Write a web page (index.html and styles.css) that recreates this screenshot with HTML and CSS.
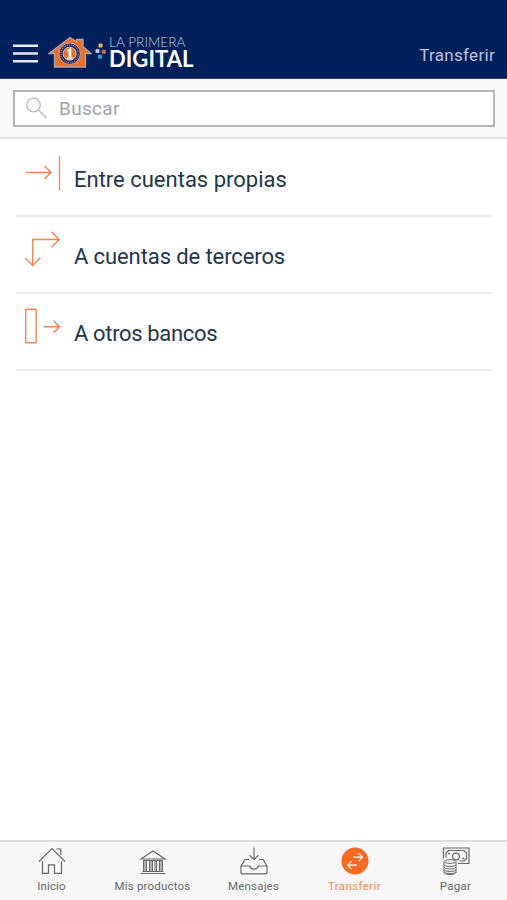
FILE: index.html
```html
<!DOCTYPE html>
<html lang="es">
<head>
<meta charset="utf-8">
<meta name="viewport" content="width=device-width, initial-scale=1">
<title>Transferir</title>
<link rel="stylesheet" href="styles.css">
</head>
<body>
<div class="app">
  <header class="topbar">
    <svg class="menu" width="25" height="20" viewBox="0 0 25 20"><path d="M0 1.700H25M0 9.500H25M0 17.200H25" stroke="#e5e9f1" stroke-width="2.500"/></svg>
    <svg class="house" width="44" height="32" viewBox="0 0 44 32">
      <path d="M1 17.500L22 1.500l6.500 4V3.500H35v7L43 17.500H37.500V31H6.500V17.500Z" fill="#ed7023" stroke="#a9a5b5" stroke-width="1.300"/>
      <circle cx="21.700" cy="17.700" r="10.700" fill="#252a60" stroke="#c9a49c" stroke-width="1"/>
      <circle cx="21.700" cy="17.700" r="8.700" fill="none" stroke="#a68e9b" stroke-width="1.200" stroke-dasharray="1 1"/>
      <circle cx="21.700" cy="17.700" r="6.500" fill="#e96f2d" stroke="#ece3df" stroke-width=".8"/>
      <path d="M19 14.500L21.500 12.500h1.800v9h1.700v2h-6v-2h1.600v-6H19Z" fill="#fff"/>
    </svg>
    <svg class="dots" width="12" height="17" viewBox="0 0 12 17">
      <rect x="3.500" y=".5" width="4" height="4" rx=".8" fill="#efb552"/>
      <rect x=".5" y="6" width="4" height="4" rx=".8" fill="#c4c5d2"/>
      <rect x="6.800" y="6.800" width="4" height="4" rx=".8" fill="#dc6847"/>
      <rect x="3" y="11.800" width="4" height="4" rx=".8" fill="#2ba5b7"/>
    </svg>
    <div class="brand"><span class="brand-top">LA PRIMERA</span><span class="brand-main">DIGITAL</span></div>
    <h1 class="title">Transferir</h1>
  </header>
  <div class="search">
    <div class="field">
      <svg width="23" height="23" viewBox="0 0 23 23" fill="none" stroke="#bcbec0" stroke-width="1.300"><circle cx="7.500" cy="8" r="6.800"/><path d="M12.500 13L20.500 21"/></svg>
      <span>Buscar</span>
    </div>
  </div>
  <main class="list">
    <div class="row">
      <svg width="38" height="38" viewBox="0 0 38 38"><path d="M2 18.500H27M20.500 12l6.500 6.500-6.500 6.500M35.500 2v34"/></svg>
      <span class="propias">Entre cuentas propias</span>
    </div>
    <div class="row">
      <svg width="38" height="38" viewBox="0 0 38 38"><path d="M8.700 34.500V8.500H35.500M27.500 .8l7.700 7.700-7.700 7.700M1.200 27l7.500 7.500 7.500-7.500"/></svg>
      <span class="terceros">A cuentas de terceros</span>
    </div>
    <div class="row">
      <svg width="38" height="38" viewBox="0 0 38 38"><rect x="1.700" y="1.200" width="10.500" height="33.500" rx="1"/><path d="M19.500 18.700H35.500M29.500 12.700l6 6-6 6"/></svg>
      <span class="bancos">A otros bancos</span>
    </div>
  </main>
  <nav class="tabs">
    <div class="tab">
      <svg width="28" height="28" viewBox="0 0 28 28"><path d="M1 14.500L14 1.500l13 13M4.500 14v12.300h6v-8.500h6v8.500h7V14M18.500 2h4.300v6"/></svg>
      <span class="t1">Inicio</span>
    </div>
    <div class="tab">
      <svg width="28" height="28" viewBox="0 0 28 28"><path d="M2 12L14 4 26 12ZM4 13.500h20M3.500 24.500h21M1.500 26.500h25"/><path d="M4.500 14v10M6 14v10M7.500 14v10M12 14v10M13.500 14v10M10.500 14v10M16 14v10M17.500 14v10M20.500 14v10M22 14v10M23.500 14v10" stroke-width="1"/></svg>
      <span class="t2">Mis productos</span>
    </div>
    <div class="tab">
      <svg width="28" height="28" viewBox="0 0 28 28"><path d="M14 .5v12M9.500 8.300L14 12.700l4.500-4.400M9 12.500H5L1 19v6.500q0 1.300 1.300 1.300h23.400q1.300 0 1.300-1.300V19l-4-6.500h-4M1 19h8.500q1.200 3.200 4.500 3.200t4.500-3.200H27"/></svg>
      <span class="t3">Mensajes</span>
    </div>
    <div class="tab active">
      <svg width="28" height="28" viewBox="0 0 28 28"><circle class="disc" cx="14" cy="14" r="13.500"/><path d="M12 10.200h9.500M17.500 6.200l4 4-4 4M16 18.200H6.500M10.500 14.200l-4 4 4 4"/></svg>
      <span class="t4">Transferir</span>
    </div>
    <div class="tab">
      <svg width="28" height="28" viewBox="0 0 28 28"><path d="M1.500 11.500V1H27v15.500H16M4 10.500V6L6.500 3.500H22L24.500 6v5.500L22 14H17.500"/><circle cx="14" cy="9.500" r="3.400"/><circle class="dot" cx="7" cy="6.500" r="1"/><circle class="dot" cx="21.300" cy="11.500" r="1"/><path class="coins" d="M2 15v10.500q0 2 6 2t6-2V15M2 17.500q0 2 6 2t6-2M2 20q0 2 6 2t6-2M2 22.500q0 2 6 2t6-2M2 25q0 1.500 6 1.500t6-1.500"/><ellipse class="coins" cx="8" cy="14.500" rx="6" ry="1.800"/></svg>
      <span class="t5">Pagar</span>
    </div>
  </nav>
</div>
</body>
</html>
```

FILE: styles.css
```css
* { box-sizing: border-box; }
body { margin: 0; font-family: Roboto, "Liberation Sans", sans-serif; background: #fff; }
.app { height: 900px; display: flex; flex-direction: column; overflow: hidden; }
svg { flex: none; display: block; }

.topbar { height: 79px; flex: none; display: flex; align-items: flex-start; padding: 0 12px 0 13px; background: #00205c; border-bottom: 1px solid #2c477a; }
.menu { margin-top: 44px; }
.house { margin: 36px 0 0 10px; }
.dots { margin: 43px 0 0 3px; }
.brand { margin: 35px 0 0 2px; display: flex; flex-direction: column; color: #fff; font-family: Lato, sans-serif; white-space: nowrap; }
.brand-top { font-size: 13.500px; line-height: 14px; font-weight: 300; letter-spacing: .1px; color: #c3cbdd; }
.brand-main { font-size: 22px; line-height: 19px; font-weight: 700; letter-spacing: .05px; }
.title { margin: 44px 0 0 auto; font-size: 17px; line-height: 22px; font-weight: 400; letter-spacing: .3px; color: #bac5db; }

.search { height: 60px; flex: none; padding: 11px 12px 0 13px; background: #f9f9f9; border-bottom: 2px solid #e0e0e0; }
.field { height: 37px; display: flex; align-items: center; gap: 10px; padding-left: 11px; border: 2px solid #b5b6b8; background: #fff; color: #a2a5a9; font-size: 19px; letter-spacing: .3px; }

.list { flex: 1; padding: 0 15px 0 16px; }
.row { height: 77px; display: flex; padding: 14px 0 0 8px; border-bottom: 2px solid #ededee; color: #23364a; font-size: 22px; line-height: 26px; }
.row:first-child { height: 78px; padding-top: 15px; }
.row svg { fill: none; stroke: #f78550; stroke-width: 1.400; }
.row span { margin: 13px 0 0 12px; }
.terceros { letter-spacing: -.1px; }
.bancos { letter-spacing: -.35px; }

.tabs { height: 60px; flex: none; display: grid; grid-template-columns: repeat(5, 101px); justify-content: center; background: #f7f7f7; border-top: 2px solid #dedede; }
.tab { display: flex; flex-direction: column; align-items: center; padding-top: 5px; font-size: 11.500px; line-height: 14px; color: #66686b; }
.tab svg { fill: none; stroke: #68696b; stroke-width: 1.200; }
.tab span { margin-top: 4px; white-space: nowrap; }
.tab .t1 { letter-spacing: .15px; }
.tab .t2 { letter-spacing: .2px; }
.tab .t3 { letter-spacing: .2px; }
.tab .t4 { letter-spacing: .4px; }
.tab .t5 { letter-spacing: .3px; }
.tab .dot { fill: #68696b; stroke: none; }
.tab .coins { stroke-width: 1; }
.active { color: #f98a50; }
.tab .disc { fill: #fc681d; stroke: none; }
.tab.active svg { stroke: #fff; }
```
